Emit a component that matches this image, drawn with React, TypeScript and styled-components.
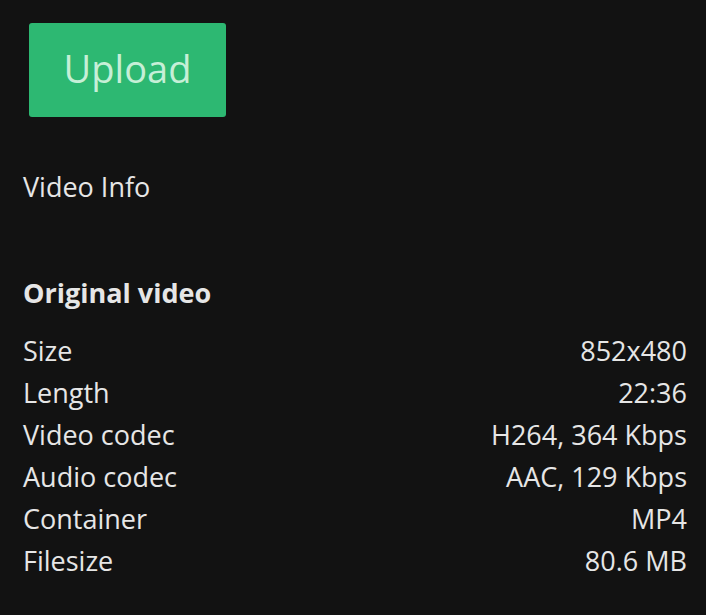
import React, { FC } from "react";
import styled, { createGlobalStyle } from "styled-components";

const GlobalStyle = createGlobalStyle`
  html, body {
    margin: 0;
    padding: 0;
    background-color: #121212;
  }
  body {
    font-family: "Open Sans", "Noto Sans", sans-serif;
    color: #e6e6e6;
  }
`;

const Page = styled.div`
  min-height: 615px;
  padding: 23px 19px 0 23px;
  box-sizing: border-box;
  background-color: #121212;
`;

const UploadButton = styled.button`
  display: flex;
  align-items: center;
  justify-content: center;
  width: 197px;
  height: 94px;
  margin-left: 6px;
  padding: 0 0 4px;
  border: none;
  border-radius: 3px;
  background-color: #2db872;
  color: #c6efd7;
  font-family: inherit;
  font-size: 38px;
  cursor: pointer;
`;

const Heading = styled.div<{ bold?: boolean; gap: number }>`
  margin-top: ${({ gap }) => gap}px;
  font-size: 27px;
  line-height: 42px;
  font-weight: ${({ bold }) => (bold ? 700 : 400)};
`;

const InfoList = styled.div`
  margin-top: 16px;
  display: flex;
  flex-direction: column;
`;

const InfoRow = styled.div`
  display: flex;
  justify-content: space-between;
  font-size: 27px;
  line-height: 42px;
`;

const infoData = [
  { label: "Size", value: "852x480" },
  { label: "Length", value: "22:36" },
  { label: "Video codec", value: "H264, 364 Kbps" },
  { label: "Audio codec", value: "AAC, 129 Kbps" },
  { label: "Container", value: "MP4" },
  { label: "Filesize", value: "80.6 MB" },
];

const App: FC = () => {
  return (
    <>
      <GlobalStyle />
      <Page>
        <UploadButton>Upload</UploadButton>
        <Heading gap={49}>Video Info</Heading>
        <Heading gap={64} bold>
          Original video
        </Heading>
        <InfoList>
          {infoData.map((item) => (
            <InfoRow key={item.label}>
              <span>{item.label}</span>
              <span>{item.value}</span>
            </InfoRow>
          ))}
        </InfoList>
      </Page>
    </>
  );
};

export default App;
